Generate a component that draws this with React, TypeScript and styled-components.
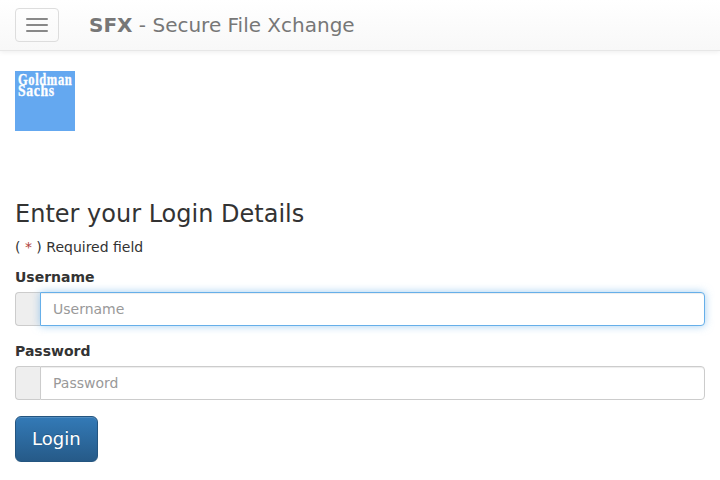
import React from "react";
import styled, { createGlobalStyle } from "styled-components";

const GlobalStyle = createGlobalStyle`
  * { box-sizing: border-box; }
  body {
    margin: 0;
    background: #fff;
    color: #333;
    font: 14px/20px "DejaVu Sans", sans-serif;
  }
`;

const Navbar = styled.header`
  display: flex;
  align-items: center;
  height: 51px;
  padding: 0 15px;
  border-bottom: 1px solid #e7e7e7;
  background: linear-gradient(to bottom, #fff 0%, #f8f8f8 100%);
  box-shadow: inset 0 1px 0 rgba(255, 255, 255, 0.15), 0 1px 5px rgba(0, 0, 0, 0.075);
`;

const Toggle = styled.button`
  display: flex;
  flex-direction: column;
  justify-content: center;
  gap: 4px;
  width: 44px;
  height: 34px;
  padding: 0 10px;
  border: 1px solid #ddd;
  border-radius: 4px;
  background: transparent;
`;

const ToggleBar = styled.span`
  height: 2px;
  border-radius: 1px;
  background: #888;
`;

const Brand = styled.div`
  margin-left: 30px;
  color: #777;
  font-size: 20px;
  text-shadow: 0 1px 0 rgba(255, 255, 255, 0.25);
`;

const Content = styled.main`
  padding: 20px 15px 0;
`;

const Logo = styled.svg`
  display: block;
  width: 60px;
  height: 60px;
`;

const Title = styled.h1`
  margin: 70px 0 10px;
  font-size: 24px;
  font-weight: 400;
  line-height: 26px;
`;

const Note = styled.p`
  margin: 0 0 10px;
`;

const Required = styled.span`
  color: #b0413a;
`;

const Field = styled.div`
  margin-bottom: 15px;
`;

const Label = styled.label`
  display: block;
  margin-bottom: 5px;
  font-weight: 700;
`;

const InputGroup = styled.div`
  display: flex;
  height: 34px;
`;

const Addon = styled.span`
  width: 25px;
  border: 1px solid #ccc;
  border-right: 0;
  border-radius: 4px 0 0 4px;
  background: #eee;
`;

const Input = styled.input<{ $active?: boolean }>`
  flex: 1;
  min-width: 0;
  padding: 6px 12px;
  border: 1px solid ${(p) => (p.$active ? "#66afe9" : "#ccc")};
  border-radius: 0 4px 4px 0;
  outline: 0;
  background: #fff;
  color: #555;
  font: inherit;
  box-shadow: inset 0 1px 1px rgba(0, 0, 0, 0.075)
    ${(p) => (p.$active ? ", 0 0 8px rgba(102, 175, 233, 0.6)" : "")};

  &::placeholder {
    color: #999;
    opacity: 1;
  }
`;

const LoginButton = styled.button`
  display: block;
  height: 46px;
  margin-top: 16px;
  padding: 10px 16px;
  border: 1px solid #245580;
  border-radius: 6px;
  background: linear-gradient(to bottom, #337ab7 0%, #265a88 100%);
  color: #fff;
  font: 18px/24px "DejaVu Sans", sans-serif;
  text-shadow: 0 -1px 0 rgba(0, 0, 0, 0.2);
  box-shadow: inset 0 1px 0 rgba(255, 255, 255, 0.15), 0 1px 1px rgba(0, 0, 0, 0.075);
`;

export default function App() {
  return (
    <>
      <GlobalStyle />
      <Navbar>
        <Toggle aria-label="Toggle navigation">
          <ToggleBar />
          <ToggleBar />
          <ToggleBar />
        </Toggle>
        <Brand>
          <b>SFX</b> - Secure File Xchange
        </Brand>
      </Navbar>
      <Content>
        <Logo viewBox="0 0 60 60" role="img" aria-label="Goldman Sachs">
          <rect width="60" height="60" fill="#64a8f0" />
          <g
            fill="#fff"
            stroke="#fff"
            strokeWidth="0.35"
            fontFamily="Liberation Serif, serif"
            fontWeight="700"
            fontSize="16.5"
            letterSpacing="0.8"
            transform="translate(3 0) scale(0.76 1)"
          >
            <text y="14" textLength="71.5" lengthAdjust="spacingAndGlyphs">Goldman</text>
            <text y="25" textLength="48.5" lengthAdjust="spacingAndGlyphs">Sachs</text>
          </g>
        </Logo>
        <Title>Enter your Login Details</Title>
        <Note>
          ( <Required>*</Required> ) Required field
        </Note>
        <form>
          <Field>
            <Label htmlFor="username">Username</Label>
            <InputGroup>
              <Addon />
              <Input id="username" placeholder="Username" $active />
            </InputGroup>
          </Field>
          <Field>
            <Label htmlFor="password">Password</Label>
            <InputGroup>
              <Addon />
              <Input id="password" type="password" placeholder="Password" />
            </InputGroup>
          </Field>
          <LoginButton type="button">Login</LoginButton>
        </form>
      </Content>
    </>
  );
}
